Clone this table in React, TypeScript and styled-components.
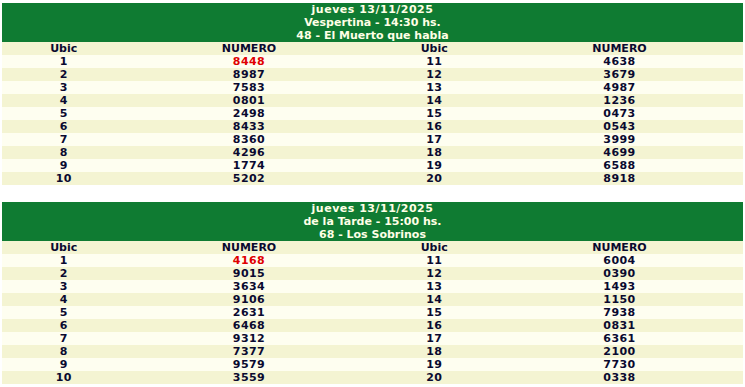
import React from "react";
import styled, { createGlobalStyle } from "styled-components";

const Global = createGlobalStyle`
  html, body { margin: 0; padding: 0; background: #ffffff; }
  body { font-family: "DejaVu Sans", Verdana, sans-serif; }
`;

const Page = styled.div`
  display: flex;
  flex-direction: column;
  gap: 17px;
  padding: 3px 2px;
  width: 741px;
`;

const Board = styled.section`
  display: flex;
  flex-direction: column;
`;

const Header = styled.div`
  background: #0f7b32;
  color: #ffffe6;
  font-size: 11px;
  font-weight: bold;
  line-height: 13px;
  text-align: center;
`;

const HeaderLine = styled.div<{ $num?: boolean }>`
  letter-spacing: ${(p) => (p.$num ? "0.5px" : "0")};
`;

const Row = styled.div<{ $alt: boolean }>`
  display: grid;
  grid-template-columns: 1fr 2fr 1fr 2fr;
  background: ${(p) => (p.$alt ? "#f4f4d2" : "#fefef0")};
  font-size: 11px;
  font-weight: bold;
  line-height: 13px;
  color: #0a0a30;
`;

const Cell = styled.div<{ $red?: boolean; $num?: boolean }>`
  text-align: center;
  letter-spacing: ${(p) => (p.$num ? "0.45px" : "0")};
  color: ${(p) => (p.$red ? "#e00000" : "inherit")};
`;

type Draw = { date: string; title: string; head: string; nums: string[] };

const draws: Draw[] = [
  {
    date: "jueves 13/11/2025",
    title: "Vespertina - 14:30 hs.",
    head: "48 - El Muerto que habla",
    nums: ["8448", "8987", "7583", "0801", "2498", "8433", "8360", "4296", "1774", "5202", "4638", "3679", "4987", "1236", "0473", "0543", "3999", "4699", "6588", "8918"],
  },
  {
    date: "jueves 13/11/2025",
    title: "de la Tarde - 15:00 hs.",
    head: "68 - Los Sobrinos",
    nums: ["4168", "9015", "3634", "9106", "2631", "6468", "9312", "7377", "9579", "3559", "6004", "0390", "1493", "1150", "7938", "0831", "6361", "2100", "7730", "0338"],
  },
];

function Table({ d }: { d: Draw }) {
  return (
    <Board>
      <Header>
        <HeaderLine $num>{d.date}</HeaderLine>
        <HeaderLine>{d.title}</HeaderLine>
        <HeaderLine>{d.head}</HeaderLine>
      </Header>
      <Row $alt>
        <Cell>Ubic</Cell>
        <Cell>NUMERO</Cell>
        <Cell>Ubic</Cell>
        <Cell>NUMERO</Cell>
      </Row>
      {Array.from({ length: 10 }, (_, i) => (
        <Row key={i} $alt={i % 2 === 1}>
          <Cell $num>{i + 1}</Cell>
          <Cell $num $red={i === 0}>{d.nums[i]}</Cell>
          <Cell $num>{i + 11}</Cell>
          <Cell $num>{d.nums[i + 10]}</Cell>
        </Row>
      ))}
    </Board>
  );
}

export default function App() {
  return (
    <>
      <Global />
      <Page>
        {draws.map((d, i) => (
          <Table key={i} d={d} />
        ))}
      </Page>
    </>
  );
}
